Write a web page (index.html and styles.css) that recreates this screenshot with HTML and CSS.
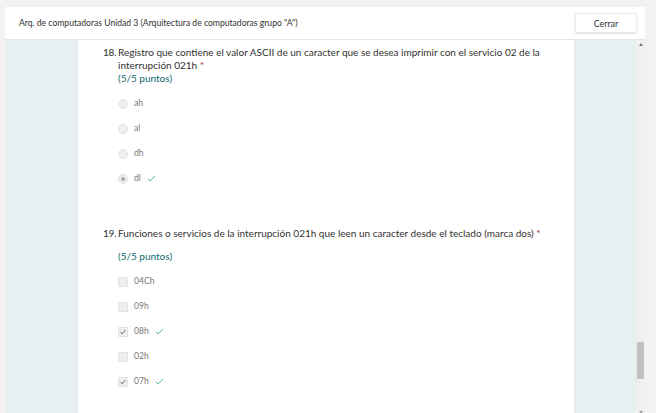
FILE: index.html
```html
<!DOCTYPE html>
<html lang="es">
<head>
<meta charset="utf-8">
<title>Arq. de computadoras</title>
<link rel="stylesheet" href="styles.css">
</head>
<body>
<div class="panel">
  <header class="topbar">
    <div class="title">Arq. de computadoras Unidad 3 (Arquitectura de computadoras grupo "A")</div>
    <button class="close">Cerrar</button>
  </header>
  <div class="body">
    <div class="viewport">
      <div class="card">
        <section class="question q18">
          <div class="qhead">
            <span class="num">18.</span>
            <div class="qtext">
              <div>Registro que contiene el valor ASCII de un caracter que se desea imprimir con el servicio 02 de la interrupción 021h <span class="req">*</span></div>
              <div class="pts">(5/5 puntos)</div>
            </div>
          </div>
          <ul class="opts">
            <li><span class="radio"></span><span class="lbl">ah</span></li>
            <li><span class="radio"></span><span class="lbl">al</span></li>
            <li><span class="radio"></span><span class="lbl">dh</span></li>
            <li><span class="radio on"></span><span class="lbl">dl</span><svg class="ok" width="9" height="7" viewBox="0 0 9 7"><polyline points="0.8,3.6 3.2,5.9 8.2,0.8" fill="none" stroke="#56b0ad" stroke-width="1"/></svg></li>
          </ul>
        </section>
        <section class="question q19">
          <div class="qhead">
            <span class="num">19.</span>
            <div class="qtext">
              <div>Funciones o servicios de la interrupción 021h que leen un caracter desde el teclado (marca dos) <span class="req">*</span></div>
              <div class="pts pts-gap">(5/5 puntos)</div>
            </div>
          </div>
          <ul class="opts">
            <li><span class="box"></span><span class="lbl">04Ch</span></li>
            <li><span class="box"></span><span class="lbl">09h</span></li>
            <li><span class="box"><svg width="10" height="10" viewBox="0 0 10 10"><polyline points="2,5.2 4,7.2 8,2.6" fill="none" stroke="#8a8886" stroke-width="1.3"/></svg></span><span class="lbl">08h</span><svg class="ok" width="9" height="7" viewBox="0 0 9 7"><polyline points="0.8,3.6 3.2,5.9 8.2,0.8" fill="none" stroke="#56b0ad" stroke-width="1"/></svg></li>
            <li><span class="box"></span><span class="lbl">02h</span></li>
            <li><span class="box"><svg width="10" height="10" viewBox="0 0 10 10"><polyline points="2,5.2 4,7.2 8,2.6" fill="none" stroke="#8a8886" stroke-width="1.3"/></svg></span><span class="lbl">07h</span><svg class="ok" width="9" height="7" viewBox="0 0 9 7"><polyline points="0.8,3.6 3.2,5.9 8.2,0.8" fill="none" stroke="#56b0ad" stroke-width="1"/></svg></li>
          </ul>
        </section>
      </div>
    </div>
    <div class="scrollbar">
      <span class="arrow up"></span>
      <span class="thumb"></span>
      <span class="arrow down"></span>
    </div>
  </div>
</div>
</body>
</html>
```
FILE: styles.css
```css
* { box-sizing: border-box; }
html, body { margin: 0; height: 100%; }
body {
  background: #f3f2f1;
  font-family: "Lato", "Open Sans", sans-serif;
  color: #323130;
  overflow: hidden;
  padding: 7px 11px 0 5px;
}
.panel {
  display: flex;
  flex-direction: column;
  height: 420px;
  background: #fff;
}
.topbar {
  height: 33px;
  flex: none;
  display: flex;
  align-items: center;
  justify-content: space-between;
  padding: 0 8px 0 14px;
  border-bottom: 1px solid #e6e5e4;
}
.title {
  font-size: 8.6px;
  color: #323130;
}
.close {
  width: 62px;
  height: 20px;
  background: #fff;
  border: 1px solid #edebe9;
  border-radius: 2px;
  box-shadow: 0 1px 2px rgba(0,0,0,0.12);
  font-family: inherit;
  font-size: 8.8px;
  color: #323130;
  padding: 0;
}
.body {
  flex: 1;
  display: flex;
  min-height: 0;
}
.viewport {
  flex: 1;
  background: #e8eff1;
  padding-left: 73px;
  overflow: hidden;
}
.card {
  width: 496px;
  height: 100%;
  background: #fff;
  box-shadow: 0 0 3px rgba(0,0,0,0.08);
  padding: 6px 0 0 25px;
}
.scrollbar {
  flex: none;
  width: 8px;
  background: #f1f0ef;
  position: relative;
}
.thumb {
  position: absolute;
  left: 0;
  top: 302px;
  width: 7px;
  height: 37px;
  background: #c2c1c0;
}
.arrow {
  position: absolute;
  left: 2px;
  width: 0;
  height: 0;
  border-left: 2px solid transparent;
  border-right: 2px solid transparent;
}
.arrow.up { top: 3px; border-bottom: 3px solid #7a7978; }
.arrow.down { top: 371px; border-top: 3px solid #a19f9d; }
.question { font-size: 10px; line-height: 13px; }
.qhead { display: flex; }
.num { flex: none; width: 15px; letter-spacing: -0.2px; }
.qtext { flex: 1; padding-right: 25px; }
.req { color: #a4262c; }
.pts { color: #0f6a6e; }
.pts-gap { margin-top: 10px; }
.opts {
  list-style: none;
  margin: 6px 0 0 0;
  padding: 0 0 0 15px;
}
.opts li {
  height: 25px;
  display: flex;
  align-items: center;
  font-size: 8.6px;
  color: #7a7876;
}
.q19 { margin-top: 36px; }
.radio {
  width: 10px;
  height: 10px;
  border-radius: 50%;
  background: #f0efee;
  border: 1px solid #e3e2e1;
  display: flex;
  align-items: center;
  justify-content: center;
  margin-right: 6px;
}
.radio.on::after {
  content: "";
  width: 4px;
  height: 4px;
  border-radius: 50%;
  background: #a8a6a4;
}
.box {
  width: 10px;
  height: 10px;
  border-radius: 1px;
  background: #f0efee;
  border: 1px solid #e3e2e1;
  margin-right: 6px;
  display: flex;
  align-items: center;
  justify-content: center;
}
.box svg { display: block; }
.ok { margin-left: 6px; }
```
